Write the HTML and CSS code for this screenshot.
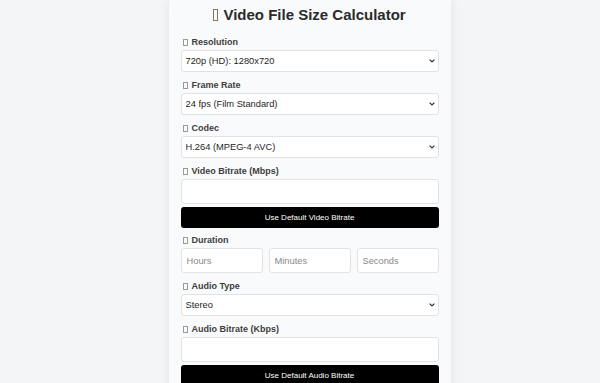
FILE: index.html
```html
<!DOCTYPE html>
<html lang="en">
<head>
    <meta charset="UTF-8">
    <meta name="viewport" content="width=device-width, initial-scale=1.0">
    <title>Video File Size Calculator</title>
    <link rel="stylesheet" href="styles.css">
</head>
<body>

<div class="page">
<div class="card">
    <h1><span class="tofu big"></span> Video File Size Calculator</h1>

    <div class="group">
        <label for="resolution"><span class="tofu"></span>Resolution</label>
        <select id="resolution">
            <option>720p (HD): 1280x720</option>
            <option>1080p (Full HD): 1920x1080</option>
            <option>4K (UHD): 3840x2160</option>
        </select>
    </div>

    <div class="group">
        <label for="fps"><span class="tofu"></span>Frame Rate</label>
        <select id="fps">
            <option>24 fps (Film Standard)</option>
            <option>30 fps</option>
            <option>60 fps</option>
        </select>
    </div>

    <div class="group">
        <label for="codec"><span class="tofu"></span>Codec</label>
        <select id="codec">
            <option>H.264 (MPEG-4 AVC)</option>
            <option>H.265 (HEVC)</option>
        </select>
    </div>

    <div class="group last">
        <label for="vbitrate"><span class="tofu"></span>Video Bitrate (Mbps)</label>
        <input type="number" id="vbitrate">
        <button class="def">Use Default Video Bitrate</button>
    </div>

    <div class="group">
        <label><span class="tofu"></span>Duration</label>
        <div class="duration">
            <input type="number" placeholder="Hours">
            <input type="number" placeholder="Minutes">
            <input type="number" placeholder="Seconds">
        </div>
    </div>

    <div class="group">
        <label for="atype"><span class="tofu"></span>Audio Type</label>
        <select id="atype">
            <option>Stereo</option>
            <option>Mono</option>
            <option>5.1 Surround</option>
        </select>
    </div>

    <div class="group">
        <label for="abitrate"><span class="tofu"></span>Audio Bitrate (Kbps)</label>
        <input type="number" id="abitrate">
        <button class="def">Use Default Audio Bitrate</button>
    </div>
</div>
</div>

</body>
</html>
```

FILE: styles.css
```css
body {
    margin: 0;
    background-color: #f4f5f7;
    font-family: "Liberation Sans", Arial, sans-serif;
    color: #333;
}

.page {
    padding-left: 19px;
}

.card {
    width: 258px;
    margin: 0 auto;
    padding: 6px 12px 20px;
    background-color: #f9fafb;
    box-shadow: 0 0 10px rgba(0, 0, 0, 0.08);
}

h1 {
    margin: 0 0 12px;
    font-size: 15px;
    line-height: 18px;
    text-align: center;
    color: #2b2b2b;
}

/* missing-glyph boxes, as the emoji show up in the screenshot */
.tofu {
    display: inline-block;
    width: 3px;
    height: 5px;
    border: 1px solid #9a9a9a;
    margin: 0 4px 0 2px;
    vertical-align: -1px;
}

.tofu.big {
    width: 3px;
    height: 10px;
    border-color: #8a7560;
    margin: 0 1px 0 0;
    vertical-align: -1px;
}

.group {
    margin-bottom: 7px;
}

.group.last {
    margin-bottom: 6px;
}

label {
    display: block;
    font-size: 9px;
    line-height: 13px;
    font-weight: bold;
    color: #3d3d3d;
    margin-bottom: 1px;
}

select,
input {
    display: block;
    width: 100%;
    box-sizing: border-box;
    font-family: "Liberation Sans", Arial, sans-serif;
    font-size: 9.3px;
    color: #1e1e1e;
    background-color: #fff;
    border: 1px solid #e3e3e3;
    border-radius: 3px;
    margin: 0;
}

select {
    height: 22px;
    padding: 0 4px;
    -webkit-appearance: none;
    appearance: none;
    background-image: url("data:image/svg+xml,%3Csvg xmlns='http://www.w3.org/2000/svg' width='6' height='4' viewBox='0 0 6 4'%3E%3Cpath d='M0.6 0.6 L3 3 L5.4 0.6' fill='none' stroke='%23333' stroke-width='1.2'/%3E%3C/svg%3E");
    background-repeat: no-repeat;
    background-position: right 3px center;
    background-size: 6px 4px;
}

input {
    height: 25px;
    padding: 0 5px;
    -moz-appearance: textfield;
}

input::-webkit-outer-spin-button,
input::-webkit-inner-spin-button {
    -webkit-appearance: none;
    margin: 0;
}

input::placeholder {
    color: #8a8a8a;
}

.duration {
    display: flex;
    gap: 6px;
}

.duration input {
    flex: 1;
    min-width: 0;
}

.def {
    display: block;
    width: 100%;
    height: 21px;
    margin-top: 3px;
    padding: 0;
    font-family: "Liberation Sans", Arial, sans-serif;
    font-size: 8px;
    color: #fff;
    background-color: #000;
    border: none;
    border-radius: 3px;
    cursor: pointer;
}
```
